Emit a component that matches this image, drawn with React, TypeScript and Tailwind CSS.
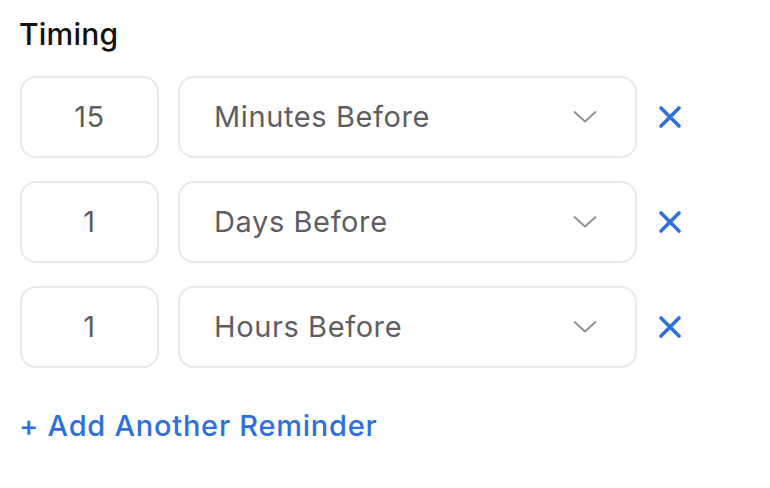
import React from 'react'

const reminders = [
  { amount: '15', unit: 'Minutes Before' },
  { amount: '1', unit: 'Days Before' },
  { amount: '1', unit: 'Hours Before' },
]

function Chevron() {
  return (
    <svg width="24" height="14" viewBox="0 0 24 14" fill="none">
      <path d="M1.5 2 L12 11.5 L22.5 2" stroke="#8e8e93" strokeWidth="1.8" strokeLinecap="round" strokeLinejoin="round" />
    </svg>
  )
}

function Cross() {
  return (
    <svg width="24" height="24" viewBox="0 0 24 24" fill="none">
      <path d="M3 3 L21 21 M21 3 L3 21" stroke="#2f6fe0" strokeWidth="3.6" strokeLinecap="round" />
    </svg>
  )
}

export default function App() {
  return (
    <div className="min-h-screen bg-white px-5 pt-[16px] font-['Inter',sans-serif]">
      <h2 className="-ml-[1px] text-[30px] font-medium leading-[36px] tracking-[0.2px] text-[#111111]">Timing</h2>

      <div className="mt-[24px] flex flex-col gap-[23px]">
        {reminders.map((r, i) => (
          <div key={i} className="flex items-center">
            <div className="flex h-[82px] w-[139px] items-center justify-center rounded-[16px] border-2 border-[#e8e8ec] text-[29px] tracking-[0.5px] text-[#5e5e62]">
              {r.amount}
            </div>
            <div className="ml-[19px] flex h-[82px] w-[459px] items-center justify-between rounded-[16px] border-2 border-[#e8e8ec] pl-[34px] pr-[38px] text-[29px] tracking-[0.6px] text-[#5e5e62]">
              <span>{r.unit}</span>
              <Chevron />
            </div>
            <button className="ml-[21px] flex h-[24px] w-[24px] items-center justify-center">
              <Cross />
            </button>
          </div>
        ))}
      </div>

      <button className="-ml-[1px] mt-[36px] text-[29px] font-medium tracking-[0.75px] text-[#2f6fe0]">+ Add Another Reminder</button>
    </div>
  )
}
